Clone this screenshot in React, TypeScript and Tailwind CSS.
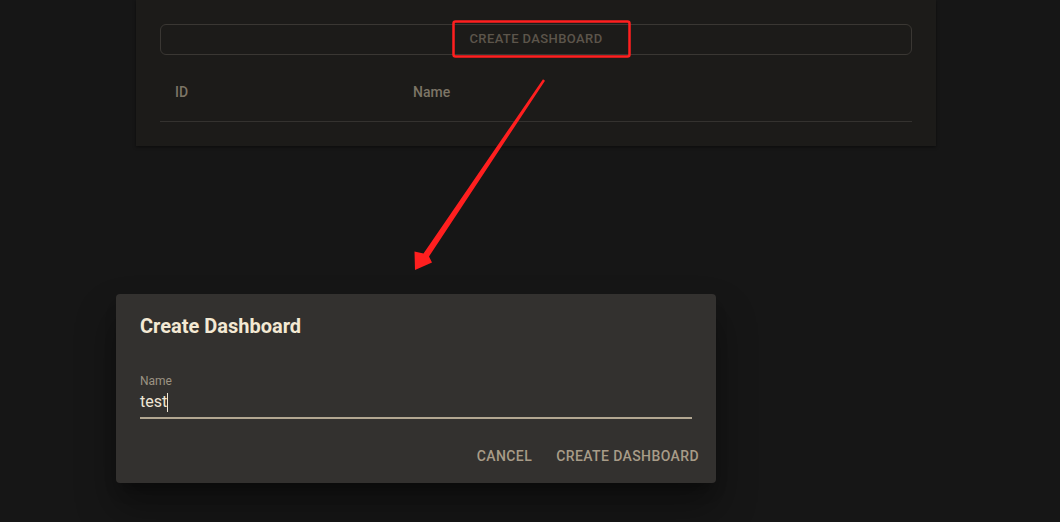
import React from 'react';

// Screenshot annotation: red callout box + arrow pointing at the dialog
const Annotations: React.FC = () => (
  <svg className="absolute left-0 top-0 pointer-events-none" width="1060" height="522">
    <rect x="453.5" y="21.5" width="176" height="35" rx="2" fill="none" stroke="#ff1f1f" strokeWidth="2.5" />
    <polygon
      points="545,80.8 543,79.2 423.5,253.5 414.5,251.5 415,270 432,262.5 429,256.5"
      fill="#ff1f1f"
    />
  </svg>
);

const CreateDialog: React.FC = () => (
  <div className="absolute left-[116px] top-[294px] w-[600px] h-[189px] bg-[#33312f] rounded shadow-[0_11px_15px_-7px_rgba(0,0,0,0.4),0_24px_38px_3px_rgba(0,0,0,0.3)] flex flex-col">
    <h2 className="px-6 pt-4 h-[48px] text-[20px] leading-8 font-bold text-[#f3e9d4]">Create Dashboard</h2>
    <div className="px-6 pt-[31px]">
      <label className="block text-[12px] leading-4 text-[#9c9383]">Name</label>
      <div className="flex items-center h-[24px] mt-[1px] text-[16px] text-[#efe6d6]">
        test<span className="inline-block w-px h-[19px] bg-[#efe6d6]" />
      </div>
      <div className="h-[2px] mt-[3px] bg-[#b3a792]" />
    </div>
    <div className="mt-auto flex justify-end gap-2 pr-[9px] pb-[9px]">
      <button className="h-9 px-2 text-[14px] font-medium tracking-[0.4px] text-[#a89c88]">CANCEL</button>
      <button className="h-9 px-2 text-[14px] font-medium tracking-[0.4px] text-[#a89c88]">CREATE DASHBOARD</button>
    </div>
  </div>
);

export default function App() {
  return (
    <div className="relative w-[1060px] h-[522px] overflow-hidden bg-[#161616] font-['Roboto','Liberation_Sans',sans-serif]">
      {/* Dashboards panel */}
      <div className="ml-[136px] w-[800px] h-[146px] bg-[#1c1b19] shadow-[0_1px_3px_rgba(0,0,0,0.5)] px-6 pt-6">
        <button className="w-full h-[31px] pb-[2px] rounded-md border border-[#3a3733] text-[13px] font-medium tracking-[0.4px] text-[#5c554b]">
          CREATE DASHBOARD
        </button>
        <div className="flex h-[67px] items-center pt-[9px] border-b border-[#34322f] text-[14px] font-medium text-[#7c7566]">
          <div className="w-[253px] pl-[15px]">ID</div>
          <div>Name</div>
        </div>
      </div>

      <CreateDialog />
      <Annotations />
    </div>
  );
}
